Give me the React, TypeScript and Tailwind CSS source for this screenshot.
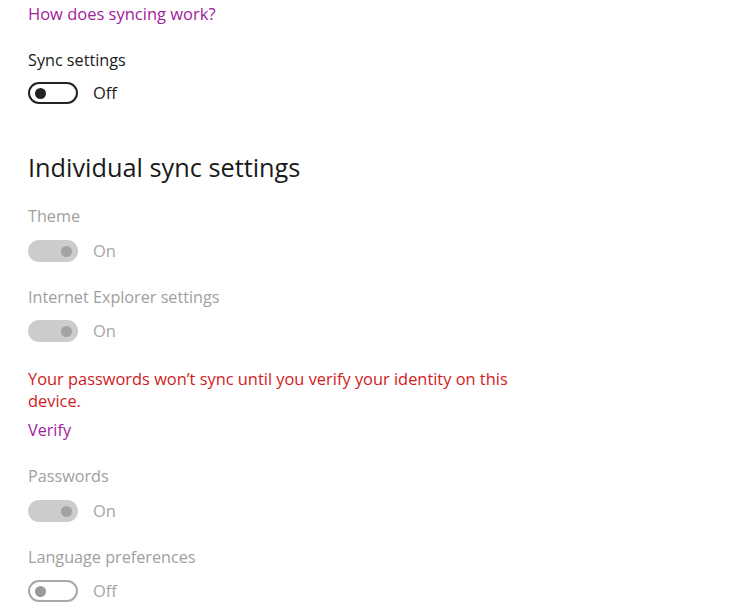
import React from 'react';

const Toggle: React.FC<{ on: boolean; disabled?: boolean }> = ({ on, disabled }) => {
  if (on) {
    return (
      <div className="flex h-[22px] w-[50px] items-center justify-end rounded-full bg-[#cccccc] pr-[6px]">
        <span className="h-[11px] w-[11px] rounded-full bg-[#a3a3a3]" />
      </div>
    );
  }
  return (
    <div
      className={`flex h-[22px] w-[50px] items-center rounded-full border-2 pl-[5px] ${
        disabled ? 'border-[#a8a8a8]' : 'border-[#222222]'
      }`}
    >
      <span className={`h-[11px] w-[11px] rounded-full ${disabled ? 'bg-[#9a9a9a]' : 'bg-[#222222]'}`} />
    </div>
  );
};

const ToggleRow: React.FC<{ on: boolean; disabled?: boolean; className?: string }> = ({ on, disabled, className }) => (
  <div className={`flex items-center ${className ?? ''}`}>
    <Toggle on={on} disabled={disabled} />
    <span className={`ml-[15px] text-[16.5px] leading-[22px] ${disabled ? 'text-[#a6a6a6]' : 'text-[#1a1a1a]'}`}>
      {on ? 'On' : 'Off'}
    </span>
  </div>
);

const Label: React.FC<{ children: React.ReactNode; disabled?: boolean; className?: string }> = ({
  children,
  disabled,
  className,
}) => (
  <div className={`text-[16.2px] leading-[20px] ${disabled ? 'text-[#a0a0a0]' : 'text-[#1a1a1a]'} ${className ?? ''}`}>
    {children}
  </div>
);

export default function App() {
  return (
    <div className="min-h-[613px] w-[750px] bg-white pl-[28px] font-['Segoe_UI','Open_Sans',sans-serif]">
      <div className="pt-[4px] text-[16.5px] leading-[20px] text-[#a1229c]">How does syncing work?</div>

      <Label className="mt-[26px]">Sync settings</Label>
      <ToggleRow on={false} className="mt-[12px]" />

      <h2 className="mt-[45px] text-[25.3px] font-normal leading-[36px] text-[#1a1a1a]">Individual sync settings</h2>

      <Label disabled className="mt-[21px]">Theme</Label>
      <ToggleRow on disabled className="mt-[14px]" />

      <Label disabled className="mt-[25px]">Internet Explorer settings</Label>
      <ToggleRow on disabled className="mt-[13px]" />

      <div className="mt-[26px] w-[515px] text-[16.4px] leading-[22px] text-[#d01c1c]">
        Your passwords won’t sync until you verify your identity on this device.
      </div>
      <div className="mt-[8px] text-[16.2px] leading-[20px] text-[#a1229c]">Verify</div>

      <Label disabled className="mt-[26px]">Passwords</Label>
      <ToggleRow on disabled className="mt-[14px]" />

      <Label disabled className="mt-[25px]">Language preferences</Label>
      <ToggleRow on={false} disabled className="mt-[13px]" />
    </div>
  );
}
